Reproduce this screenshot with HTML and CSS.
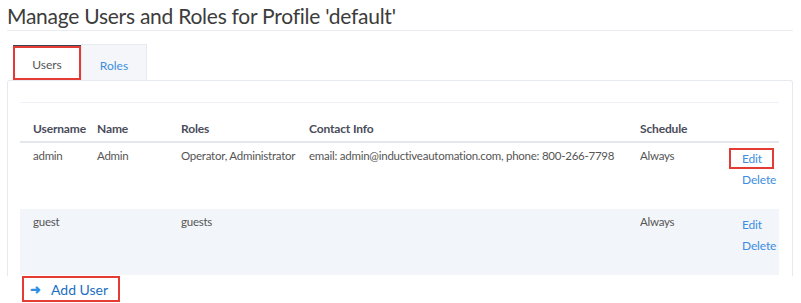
FILE: index.html
```html
<!DOCTYPE html>
<html>
<head>
<meta charset="utf-8">
<link rel="stylesheet" href="styles.css">
</head>
<body>
<div class="page">
  <h1 class="title">Manage Users and Roles for Profile 'default'</h1>
  <div class="tabs">
    <div class="tab active"><span>Users</span></div>
    <div class="tab"><span>Roles</span></div>
  </div>
  <div class="panel">
    <div class="divider"></div>
    <table class="users">
      <colgroup>
        <col class="c-user"><col class="c-name"><col class="c-roles"><col class="c-contact"><col class="c-sched"><col class="c-act">
      </colgroup>
      <thead>
        <tr>
          <th>Username</th>
          <th>Name</th>
          <th>Roles</th>
          <th>Contact Info</th>
          <th>Schedule</th>
          <th></th>
        </tr>
      </thead>
      <tbody>
        <tr>
          <td>admin</td>
          <td>Admin</td>
          <td>Operator, Administrator</td>
          <td>email: admin@inductiveautomation.com, phone: 800-266-7798</td>
          <td>Always</td>
          <td class="act-cell"><a class="act edit boxed">Edit</a><a class="act">Delete</a></td>
        </tr>
        <tr class="alt">
          <td>guest</td>
          <td></td>
          <td>guests</td>
          <td></td>
          <td>Always</td>
          <td class="act-cell"><a class="act edit">Edit</a><a class="act">Delete</a></td>
        </tr>
      </tbody>
    </table>
  </div>
  <a class="add"><span class="arrow">&#10140;</span>Add User</a>
</div>
</body>
</html>
```
FILE: styles.css
```css
html, body { margin: 0; padding: 0; background: #fff; }
body { font-family: Lato, "Open Sans", sans-serif; color: #555; }
.page { padding: 0 8px 0 7px; }
.title {
  margin: 0;
  padding-top: 3px;
  height: 27px;
  font-size: 21px;
  letter-spacing: -0.25px;
  font-weight: 400;
  color: #3c3c3c;
  border-bottom: 1px solid #eaeef3;
  white-space: nowrap;
}
.tabs { display: flex; margin-top: 13px; padding-left: 6px; height: 36px; }
.tab {
  width: 66px;
  display: flex; align-items: center; justify-content: center;
  font-size: 12px;
  background: #f4f6f9;
  border: 1px solid #e7ebf0;
  border-bottom: none;
  color: #3d8ee0;
  box-sizing: border-box;
  padding-top: 6px;
}
.tab.active {
  background: #fff;
  color: #555;
  border: 2px solid #e53b35;
  box-shadow: 0 -1px 0 #3a4556;
  height: 34px;
  margin-top: 2px;
  width: 68px;
  padding-top: 2px;
}
.panel {
  border: 1px solid #e6eaef;
  border-bottom: none;
  border-radius: 3px 3px 0 0;
  padding: 0 13px 0 12px;
  height: 195px;
}
.divider { height: 21px; border-bottom: 1px solid #eef1f5; }
.users {
  width: 759px;
  table-layout: fixed;
  margin-top: 12px;
  border-collapse: collapse;
  font-size: 12px;
  letter-spacing: -0.15px;
}
.c-user { width: 64px; }
.c-name { width: 84px; }
.c-roles { width: 128px; }
.c-contact { width: 331px; }
.c-sched { width: 102px; }
.c-act { width: 50px; }
.users th {
  text-align: left;
  font-weight: 700;
  color: #4a4c5a;
  height: 26px;
  padding: 0 0 0 13px;
  border-bottom: 2px solid #e3e8ef;
  vertical-align: middle;
  white-space: nowrap;
}
.users td {
  padding: 6px 0 0 13px;
  height: 60px;
  vertical-align: top;
  color: #555;
  white-space: nowrap;
  font-size: 11.5px;
  letter-spacing: -0.25px;
}
.users tr.alt td { background: #f2f5f9; }
.users td.act-cell { padding-left: 0; font-size: 12px; letter-spacing: -0.15px; }
.act { display: block; color: #3d8ee0; width: 36px; margin-left: 13px; line-height: 21px; }
.act.edit { margin-top: -1px; }
.act.boxed {
  outline: 2px solid #e53b35;
  width: 41px; margin-left: 2px; padding-left: 11px;
  box-sizing: border-box; line-height: 17px;
  margin-bottom: 2px; margin-top: 1px;
}
.add {
  display: inline-flex; align-items: center;
  margin-left: 15px;
  height: 22px;
  padding: 0 10px 0 6px;
  border: 2px solid #e53b35;
  font-size: 14px;
  color: #1c6fbf;
}
.arrow { font-size: 13px; font-weight: 700; color: #2f8fe6; margin-right: 10px; }
```
